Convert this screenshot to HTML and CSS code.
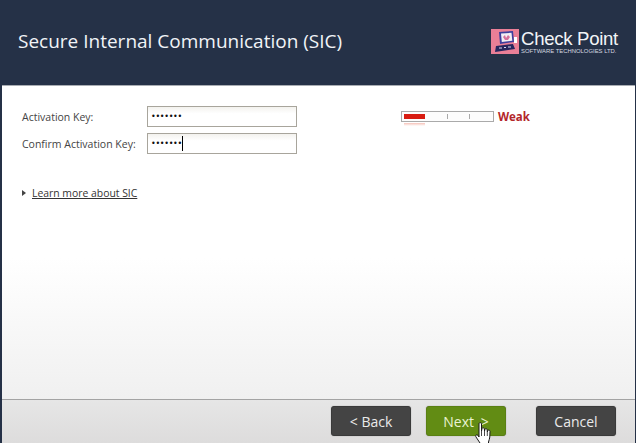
FILE: index.html
```html
<!DOCTYPE html>
<html>
<head>
<meta charset="utf-8">
<title>Secure Internal Communication (SIC)</title>
<link rel="stylesheet" href="styles.css">
</head>
<body>

<div class="wizard">
	<header class="header">
		<h1 class="title">Secure Internal Communication (SIC)</h1>
		<div class="logo">
			<svg class="logo-icon" width="28" height="25" viewBox="0 0 28 25">
				<rect width="28" height="25" fill="#ea7f97"/>
				<path d="M8 3 L22 2 L23 13 L9 15 Z" fill="#3d3f9e"/>
				<path d="M10 4.500 L20.500 3.800 L21.300 11.800 L10.800 13 Z" fill="#f3eef4"/>
				<path d="M12 8 L14 6 L15 9 L17 6 L19 8 L17 11 L14 11 Z" fill="#d56f9b"/>
				<path d="M5 17 L22 15 L24 20 L4 23 Z" fill="#26265e"/>
				<path d="M8 19 H11 M13 18.500 H15 M17 18 H20" stroke="#d8d8f0" stroke-width="1" fill="none"/>
				<path d="M23 8 L26 8 L26 14 L23 14 Z" fill="#fff"/>
			</svg>
			<div class="logo-text">
				<div class="logo-name">Check Point</div>
				<div class="logo-sub">SOFTWARE TECHNOLOGIES LTD.</div>
			</div>
		</div>
	</header>

	<main class="content">
		<div class="top-row">
			<div class="fields">
				<div class="field">
					<label class="field-label">Activation Key:</label>
					<div class="field-box">•••••••</div>
				</div>
				<div class="field">
					<label class="field-label">Confirm Activation Key:</label>
					<div class="field-box">•••••••<span class="caret"></span></div>
				</div>
			</div>
			<div class="strength">
				<div class="meter">
					<div class="meter-fill"></div>
					<div class="meter-tick"></div>
					<div class="meter-tick"></div>
				</div>
				<span class="strength-text">Weak</span>
			</div>
		</div>
		<div class="learn">
			<span class="learn-arrow"></span>
			<a class="learn-link" href="#">Learn more about SIC</a>
		</div>
	</main>

	<footer class="footer">
		<button class="btn">&lt; Back</button>
		<button class="btn btn-next">Next &gt;</button>
		<button class="btn btn-cancel">Cancel</button>
		<!-- mouse pointer over Next -->
		<svg class="pointer" width="18" height="24" viewBox="0 0 18 24">
			<path d="M4 1.500 C4 0.500 6.500 0.500 6.500 1.500 L6.500 9 L7 6.500 C7.300 5.500 9.300 5.500 9.400 6.800 L9.500 9 L10 7.300 C10.400 6.300 12.200 6.500 12.200 7.800 L12.300 10 L12.800 8.600 C13.300 7.700 15 8 15 9.300 L14.800 15 C14.600 17 14 18 13.500 20 L13.500 24 L5.500 24 L5 21 L1 15 C0 13.500 1.500 12 3 13.500 L4 15 Z" fill="#fff" stroke="#1a1a1a" stroke-width="1"/>
			<path d="M6.500 9 V14 M9.500 9 V14 M12.300 10 V14" stroke="#1a1a1a" stroke-width="0.800" fill="none"/>
		</svg>
	</footer>
</div>

</body>
</html>
```

FILE: styles.css
```css
* {
	margin: 0;
	padding: 0;
	box-sizing: border-box;
}
html, body {
	height: 100%;
}
body {
	background: #253147;
	font-family: "Open Sans", "Noto Sans", sans-serif;
	overflow: hidden;
}
.wizard {
	display: flex;
	flex-direction: column;
	height: 443px;
	padding: 0 1px 0 2px;
}
.header {
	display: flex;
	justify-content: space-between;
	align-items: center;
	height: 85px;
	flex: none;
	padding: 0 18px 4px 16px;
}
.title {
	font-size: 19px;
	font-weight: 400;
	color: #f1f4f8;
	white-space: nowrap;
}
.logo {
	display: flex;
	align-items: center;
	gap: 2px;
	margin-top: 2px;
}
.logo-icon {
	display: block;
}
.logo-text {
	width: 96px;
	color: #f2f4f7;
	font-family: "Liberation Sans", sans-serif;
}
.logo-name {
	font-size: 18.600px;
	line-height: 19px;
	letter-spacing: -0.3px;
	white-space: nowrap;
}
.logo-sub {
	font-size: 5.900px;
	line-height: 7px;
	color: #d5d9e0;
	white-space: nowrap;
}
.content {
	flex: 1;
	padding: 20px 0 0 20px;
	background: linear-gradient(#fff 0, #fff 55%, #f0f0f0 100%);
	border-top: 1px solid #a9adb3;
	border-bottom: 1px solid #a3a3a3;
}
.top-row {
	display: flex;
	align-items: flex-start;
}
.fields {
	display: flex;
	flex-direction: column;
	gap: 6px;
	width: 379px;
}
.field {
	display: flex;
	align-items: center;
}
.field-label {
	width: 125px;
	font-size: 10.500px;
	color: #444;
	white-space: nowrap;
}
.field-box {
	display: flex;
	align-items: center;
	width: 150px;
	height: 21px;
	padding-left: 3px;
	background: linear-gradient(#f3f2ee, #fff 35%);
	border: 1px solid #a8a59c;
	font-family: "DejaVu Sans", sans-serif;
	font-size: 8px;
	letter-spacing: -0.3px;
	color: #111;
}
.caret {
	display: block;
	width: 1px;
	height: 15px;
	background: #000;
}
.strength {
	display: flex;
	align-items: center;
	gap: 4px;
	margin-top: 3px;
}
.meter {
	position: relative;
	display: flex;
	align-items: center;
	gap: 21px;
	width: 93px;
	height: 11px;
	padding-left: 45px;
	border: 1px solid #aaa;
	background: #fdfdfd;
}
.meter::after {
	content: "";
	position: absolute;
	left: 2px;
	top: 11px;
	width: 21px;
	height: 3px;
	background: linear-gradient(#f6c2b8, #fff);
}
.meter-fill {
	position: absolute;
	left: 2px;
	top: 2px;
	width: 21px;
	height: 5px;
	background: #d81c12;
}
.meter-tick {
	width: 1px;
	height: 5px;
	background: #aaa;
}
.strength-text {
	font-family: "Noto Sans", sans-serif;
	font-size: 11.500px;
	font-weight: 700;
	color: #b3262a;
}
.learn {
	display: flex;
	align-items: center;
	margin-top: 32px;
	font-size: 10.400px;
}
.learn-arrow {
	width: 0;
	height: 0;
	margin-right: 6px;
	border-left: 4px solid #444;
	border-top: 3px solid transparent;
	border-bottom: 3px solid transparent;
}
.learn-link {
	color: #333;
}
.footer {
	position: relative;
	display: flex;
	align-items: flex-start;
	height: 43px;
	flex: none;
	padding: 6px 0 0 329px;
	background: linear-gradient(#e6e6e6, #dddcdc);
}
.btn {
	width: 80px;
	height: 30px;
	background: #444;
	border: 1px solid #3a3a3a;
	border-radius: 3px;
	box-shadow: 0 0 1px #777;
	font-family: "Open Sans", sans-serif;
	font-size: 14px;
	color: #eaeaea;
}
.btn-next {
	margin-left: 15px;
	background: #628c14;
	border-color: #5a8012;
	color: #e9f3d2;
	word-spacing: 3px;
}
.btn-cancel {
	margin-left: 30px;
}
.pointer {
	position: absolute;
	left: 473px;
	top: 22px;
}
```
